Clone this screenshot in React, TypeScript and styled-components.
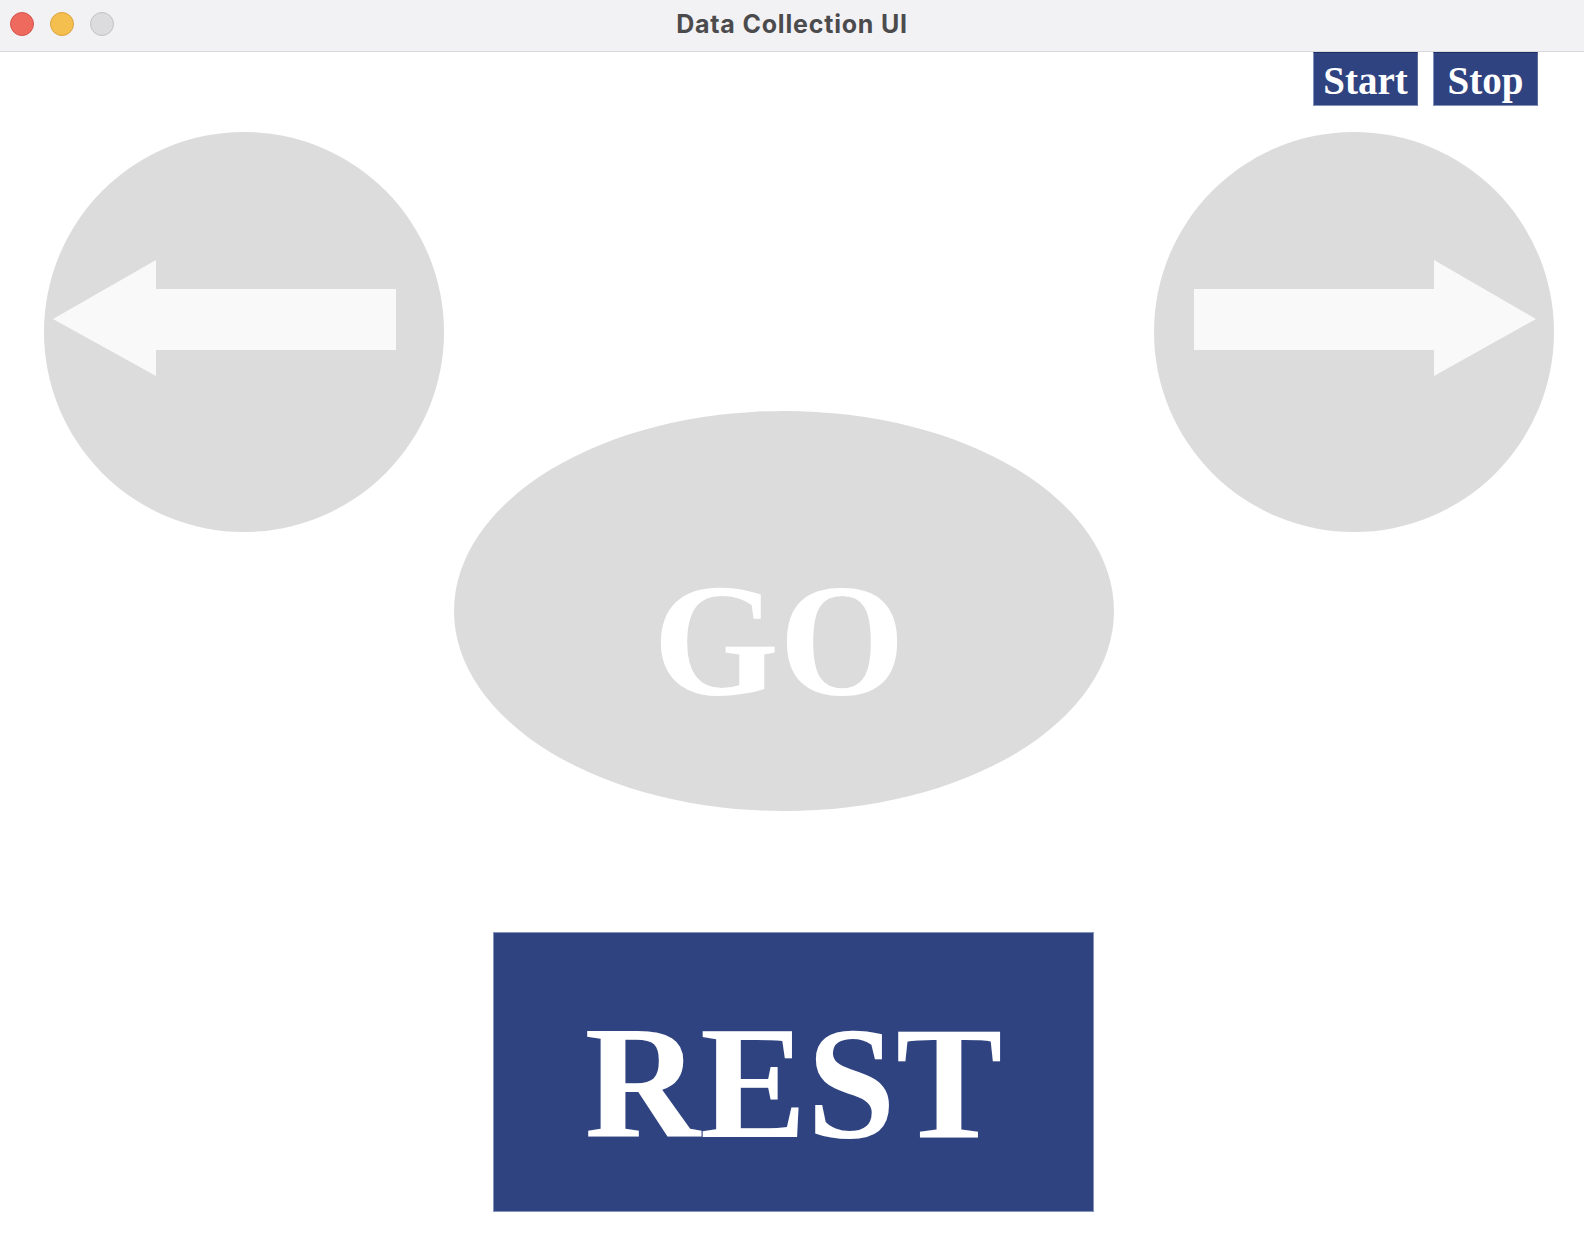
import React from 'react';
import styled, { createGlobalStyle } from 'styled-components';

const GlobalStyle = createGlobalStyle`
  html, body {
    margin: 0;
    padding: 0;
    background: #ffffff;
  }
  body {
    font-family: "Liberation Serif", "Times New Roman", serif;
  }
`;

const Window = styled.div`
  width: 1584px;
  height: 1244px;
  display: flex;
  flex-direction: column;
  background: #ffffff;
  overflow: hidden;
`;

const TitleBar = styled.div`
  height: 51px;
  border-bottom: 1px solid #d9d9db;
  background: #f2f2f4;
  display: grid;
  grid-template-columns: 1fr auto 1fr;
  align-items: center;
  padding: 0 10px;
`;

const Lights = styled.div`
  display: flex;
  gap: 16px;
  margin-top: -3px;
`;

const Light = styled.span<{ $fill: string; $edge: string }>`
  width: 24px;
  height: 24px;
  border-radius: 50%;
  box-sizing: border-box;
  background: ${p => p.$fill};
  border: 1px solid ${p => p.$edge};
`;

const Title = styled.div`
  font-family: Inter, "Noto Sans", sans-serif;
  font-weight: 700;
  font-size: 25px;
  letter-spacing: 0.8px;
  color: #4b4b4d;
  margin-top: -4px;
`;

const Content = styled.div`
  flex: 1;
  display: flex;
  flex-direction: column;
`;

const TopBar = styled.div`
  display: flex;
  justify-content: flex-end;
  gap: 15px;
  padding-right: 46px;
`;

const SmallButton = styled.button`
  width: 105px;
  height: 54px;
  padding: 3px 0 0;
  margin: 0;
  box-sizing: border-box;
  background: #2f4381;
  border: none;
  border-top: 1px solid #1f2f66;
  border-left: 1px solid #8593ba;
  border-bottom: 1px solid #8593ba;
  border-right: 1px solid #5a6a9a;
  color: #ffffff;
  font-family: "Liberation Serif", "Times New Roman", serif;
  font-weight: 700;
  font-size: 39px;
  line-height: 1;
  display: flex;
  align-items: center;
  justify-content: center;
`;

const Stage = styled.div`
  display: grid;
  grid-template-columns: 400px 660px 400px;
  column-gap: 10px;
  margin-top: 26px;
  padding-left: 44px;
`;

const Circle = styled.button<{ $shift?: number }>`
  width: 400px;
  height: 400px;
  padding: 0;
  border: none;
  border-radius: 50%;
  background: #dcdcdc;
  margin-left: ${p => p.$shift ?? 0}px;
  display: block;
  svg {
    display: block;
  }
`;

const MiddleColumn = styled.div`
  padding-top: 279px;
`;

const Ellipse = styled.button`
  width: 660px;
  height: 400px;
  padding: 58px 0 0;
  margin: 0;
  box-sizing: border-box;
  border: none;
  border-radius: 50%;
  background: #dcdcdc;
  color: #ffffff;
  font-family: "Liberation Serif", "Times New Roman", serif;
  font-weight: 700;
  font-size: 162px;
  line-height: 1;
  display: flex;
  align-items: center;
  justify-content: center;
  text-indent: -10px;
`;

const RestRow = styled.div`
  margin-top: 121px;
  padding-left: 493px;
`;

const RestButton = styled.button`
  width: 601px;
  height: 280px;
  padding: 22px 0 0;
  margin: 0;
  box-sizing: border-box;
  background: #2f4381;
  border: 1px solid #8593ba;
  color: #ffffff;
  font-family: "Liberation Serif", "Times New Roman", serif;
  font-weight: 700;
  font-size: 160px;
  line-height: 1;
  display: flex;
  align-items: center;
  justify-content: center;
`;

const ArrowLeft = () => (
  <svg width="400" height="400" viewBox="0 0 400 400">
    <polygon
      points="9,187 112,128 112,157 352,157 352,218 112,218 112,244"
      fill="#f9f9f9"
    />
  </svg>
);

const ArrowRight = () => (
  <svg width="400" height="400" viewBox="0 0 400 400">
    <polygon
      points="40,157 280,157 280,128 382,187 280,244 280,218 40,218"
      fill="#f9f9f9"
    />
  </svg>
);

const App: React.FC = () => {
  return (
    <Window>
      <GlobalStyle />
      <TitleBar>
        <Lights>
          <Light $fill="#ee6a5f" $edge="#d4554b" />
          <Light $fill="#f5bf4f" $edge="#d9a340" />
          <Light $fill="#dcdcde" $edge="#c3c3c5" />
        </Lights>
        <Title>Data Collection UI</Title>
        <div />
      </TitleBar>
      <Content>
        <TopBar>
          <SmallButton>Start</SmallButton>
          <SmallButton>Stop</SmallButton>
        </TopBar>
        <Stage>
          <Circle aria-label="left">
            <ArrowLeft />
          </Circle>
          <MiddleColumn>
            <Ellipse>GO</Ellipse>
          </MiddleColumn>
          <Circle aria-label="right" $shift={30}>
            <ArrowRight />
          </Circle>
        </Stage>
        <RestRow>
          <RestButton>REST</RestButton>
        </RestRow>
      </Content>
    </Window>
  );
};

export default App;
